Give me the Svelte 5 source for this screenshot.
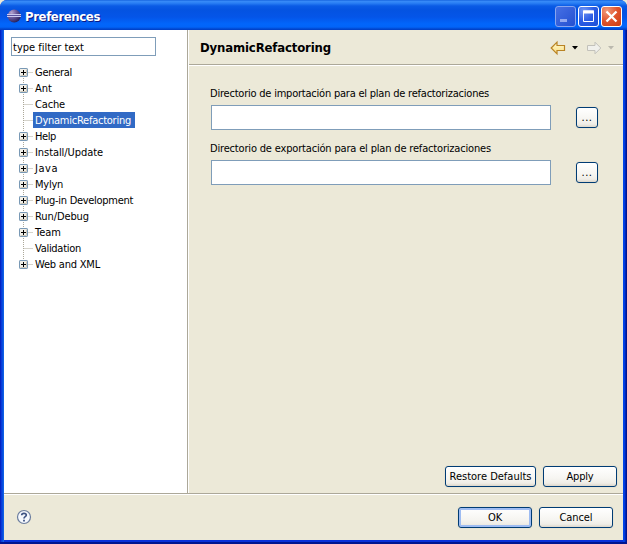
<script>
  const items = [
    { name: 'General', width: 37, open: true },
    { name: 'Ant', width: 17, open: true },
    { name: 'Cache', width: 30 },
    { name: 'DynamicRefactoring', width: 96, selected: true },
    { name: 'Help', width: 21, open: true },
    { name: 'Install/Update', width: 68, open: true },
    { name: 'Java', width: 23, open: true },
    { name: 'Mylyn', width: 28, open: true },
    { name: 'Plug-in Development', width: 98, open: true },
    { name: 'Run/Debug', width: 54, open: true },
    { name: 'Team', width: 26, open: true },
    { name: 'Validation', width: 46 },
    { name: 'Web and XML', width: 65, open: true }
  ];
  const fields = [
    { label: 'Directorio de importación para el plan de refactorizaciones', width: 279 },
    { label: 'Directorio de exportación para el plan de refactorizaciones', width: 281 }
  ];

  // Tracks the text so that it takes up the given width.
  function fit(node, width) {
    const natural = node.getBoundingClientRect().width;
    const gap = (width - natural) / node.textContent.length;
    node.style.letterSpacing = `${gap.toFixed(3)}px`;
  }
</script>

<div class="window">
  <header class="titlebar">
    <svg class="logo" width="16" height="16" viewBox="0 0 16 16">
      <defs>
        <radialGradient id="orb" cx="0.3" cy="0.25" r="0.85">
          <stop offset="0" stop-color="#b5a5cf" />
          <stop offset="0.45" stop-color="#6a5a9c" />
          <stop offset="1" stop-color="#1d1852" />
        </radialGradient>
      </defs>
      <ellipse cx="7.2" cy="8" rx="6.6" ry="6.5" fill="url(#orb)" />
      <path d="M0 6.5H14M0 8.500H14" stroke="#c9c9f0" stroke-width="1" />
      <path d="M1 7.500H14" stroke="#5a519c" stroke-width="1" />
    </svg>
    <span class="caption" use:fit={75}>Preferences</span>
    <div class="controls">
      <div class="ctl dim"><svg width="21" height="21"><path d="M5 14.5h7" stroke="#92a9f0" stroke-width="3" /></svg></div>
      <div class="ctl"><svg width="21" height="21"><path d="M5.5 5h10v10.5h-10z" fill="none" stroke="#fff" /><path d="M5 6h11" stroke="#fff" stroke-width="3" /></svg></div>
      <div class="ctl close"><svg width="21" height="21"><path d="M5.5 5.5l10 10m0-10l-10 10" stroke="#fff" stroke-width="2.3" /></svg></div>
    </div>
  </header>

  <div class="body">
    <div class="main">
      <aside>
        <div class="filter"><span use:fit={71}>type filter text</span></div>
        <div class="tree">
          {#each items as item}
            <div class="row">
              <svg width="14" height="16">
                <path class="dots" d="M4.5 0V16M4.5 8.5H14" />
                {#if item.open}
                  <rect x="0.5" y="4.5" width="8" height="8" rx="0.6" fill="#f1efe8" stroke="#7898b5" />
                  <path d="M1.5 11.5h6v-6" fill="none" stroke="#cfc9bb" />
                  <path d="M2 8.5h5M4.5 6v5" stroke="#000" />
                {/if}
              </svg>
              <span class="item" class:selected={item.selected}><span use:fit={item.width}>{item.name}</span></span>
            </div>
          {/each}
        </div>
      </aside>

      <section>
        <div class="head">
          <span class="title" use:fit={131}>DynamicRefactoring</span>
          <svg width="66" height="16" viewBox="0 0 66 16">
            <defs>
              <linearGradient id="gold" x1="0" y1="0" x2="0" y2="1"><stop offset="0" stop-color="#fffbd0" /><stop offset="1" stop-color="#fbdc80" /></linearGradient>
            </defs>
            <path d="M1.2 8L7 2.2V5.500H14.5V10.500H7V13.800Z" fill="url(#gold)" stroke="#b98324" stroke-width="1.2" />
            <path d="M22 6h6l-3 3.4z" fill="#000" />
            <path d="M50.8 8L45 2.200V5.500H37.500V10.500H45V13.800Z" fill="#f0f0ec" stroke="#c2c1ba" />
            <path d="M58 6h6l-3 3.400z" fill="#bbb9ae" />
          </svg>
        </div>
        <div class="page">
          {#each fields as field}
            <div class="field">
              <div class="label"><span use:fit={field.width}>{field.label}</span></div>
              <div class="line">
                <div class="input"></div>
                <div class="button browse"><span use:fit={11}>...</span></div>
              </div>
            </div>
          {/each}
        </div>
        <div class="actions">
          <div class="button restore"><span use:fit={82}>Restore Defaults</span></div>
          <div class="button apply"><span use:fit={27}>Apply</span></div>
        </div>
      </section>
    </div>

    <footer>
      <svg width="16" height="16" viewBox="0 0 16 16">
        <circle cx="8" cy="8" r="6.500" fill="#f5f8fd" stroke="#6b7d9e" stroke-width="1.2" />
        <path d="M5.700 6.300C5.700 3.700 10.300 3.700 10.300 6.100C10.300 7.700 8 7.600 8 9.500" fill="none" stroke="#3f5483" stroke-width="1.700" />
        <path d="M7.100 10.700h1.800v1.700h-1.800z" fill="#3f5483" />
      </svg>
      <div class="confirm">
        <div class="button ok"><span use:fit={14}>OK</span></div>
        <div class="button"><span use:fit={33}>Cancel</span></div>
      </div>
    </footer>
  </div>
</div>

<style>
  :global(body) { background: #ece9d8; }
  .window {
    box-sizing: border-box; width: 627px; height: 544px; overflow: hidden;
    display: flex; flex-direction: column; border-radius: 7px 7px 0 0;
    background: linear-gradient(90deg, #0016ad 0, #0831d9 1px, #0855dd 3px, #166aee 4px, #0831d9 4px, #0831d9 623px, #0147ec 623px, #0138dd 625px, #001590 626px);
    color: #000;
    font: 11px/16px Tahoma, "DejaVu Sans Condensed", "DejaVu Sans", sans-serif;
    white-space: nowrap;
  }
  .titlebar {
    box-sizing: border-box; height: 30px; flex: none; display: flex; align-items: center;
    padding: 3px 5px 0 7px;
    background: linear-gradient(#0a58d8 0, #3a8cf8 1px, #2b80f5 3px, #0a5be5 6px, #0453e1 10px, #0455e8 17px, #0266fb 24px, #0264f8 27px, #0147cf 29px, #003dc4 30px);
  }
  .logo { flex: none; margin-top: -1px; }
  .caption { margin-left: 2px; font-weight: bold; font-size: 13px; color: #fff; text-shadow: 1px 1px #0a1883; }
  .controls { display: flex; gap: 2px; margin-left: auto; }
  .ctl {
    box-sizing: border-box; width: 21px; height: 21px; border: 1px solid #fff; border-radius: 3px;
    background: radial-gradient(circle at 25% 20%, #6f95f4, #2b5ce4 50%, #1c4fd6);
  }
  .ctl svg { display: block; margin: -1px; }
  .dim { border-color: #88a5ef; background: linear-gradient(135deg, #4670e5, #2450d0); }
  .close { background: radial-gradient(circle at 25% 20%, #f09a7c, #e0532d 50%, #cc3d12); }
  .body { flex: 1; display: flex; flex-direction: column; background: #ece9d8; margin: 0 4px; border-bottom: 4px solid #0831d9; }
  .window::after { content: ""; height: 2px; margin-top: -2px; flex: none; background: #001590; }
  .main { height: 463px; display: flex; border-bottom: 1px solid #aca899; }
  aside { box-sizing: border-box; width: 184px; flex: none; background: #fff; border-right: 1px solid #aca899; padding: 7px 0 0 7px; }
  .filter { box-sizing: border-box; width: 145px; height: 19px; border: 1px solid #7f9db9; padding: 1px 1px; line-height: 17px; }
  .filter, .row, .label, .button { display: flex; }
  .tree { margin: 8px 0 0 8px; }
  .row { height: 16px; }
  .row svg { flex: none; display: block; }
  .dots { fill: none; stroke: #aca899; stroke-dasharray: 1 1; }
  .row:first-child .dots { clip-path: inset(8px 0 0 0); }
  .row:last-child .dots { clip-path: inset(0 0 7px 0); }
  .item { box-sizing: border-box; height: 16px; padding: 0 4px 0 2px; line-height: 18px; }
  .selected { background: #316ac5; color: #fff; }
  section { flex: 1; display: flex; flex-direction: column; border-left: 1px solid #fff; }
  .head {
    box-sizing: border-box; height: 36px; display: flex; align-items: center; justify-content: space-between;
    padding: 1px 7px 0 11px; border-bottom: 1px solid #fff; box-shadow: inset 0 -1px #aca899;
  }
  .title { font-size: 13px; font-weight: bold; }
  .page { flex: 1; padding: 20px 0 0 22px; }
  .label { margin-left: -1px; }
  .field { height: 55px; }
  .line { display: flex; align-items: center; gap: 25px; height: 25px; margin-top: 3px; }
  .input { box-sizing: border-box; width: 340px; height: 25px; border: 1px solid #7f9db9; background: #fff; }
  .button {
    box-sizing: border-box; width: 74px; height: 21px; justify-content: center; line-height: 20px;
    border: 1px solid #003c74; border-radius: 3px;
    background: linear-gradient(#fff, #f6f5f1 60%, #efede7 85%, #dcd6ca);
    box-shadow: 0 0 0 1px #e7e3d3;
  }
  .browse { width: 22px; }
  .actions { display: flex; justify-content: flex-end; gap: 7px; padding: 0 6px 6px 0; }
  .restore { width: 91px; }
  footer { flex: 1; display: flex; align-items: center; justify-content: space-between; padding: 0 10px 1px 12px; border-top: 1px solid #fff; }
  .confirm { display: flex; gap: 7px; }
  .ok { box-shadow: inset 0 0 0 2px #9ebcf2, 0 0 0 1px #e7e3d3; }
</style>
